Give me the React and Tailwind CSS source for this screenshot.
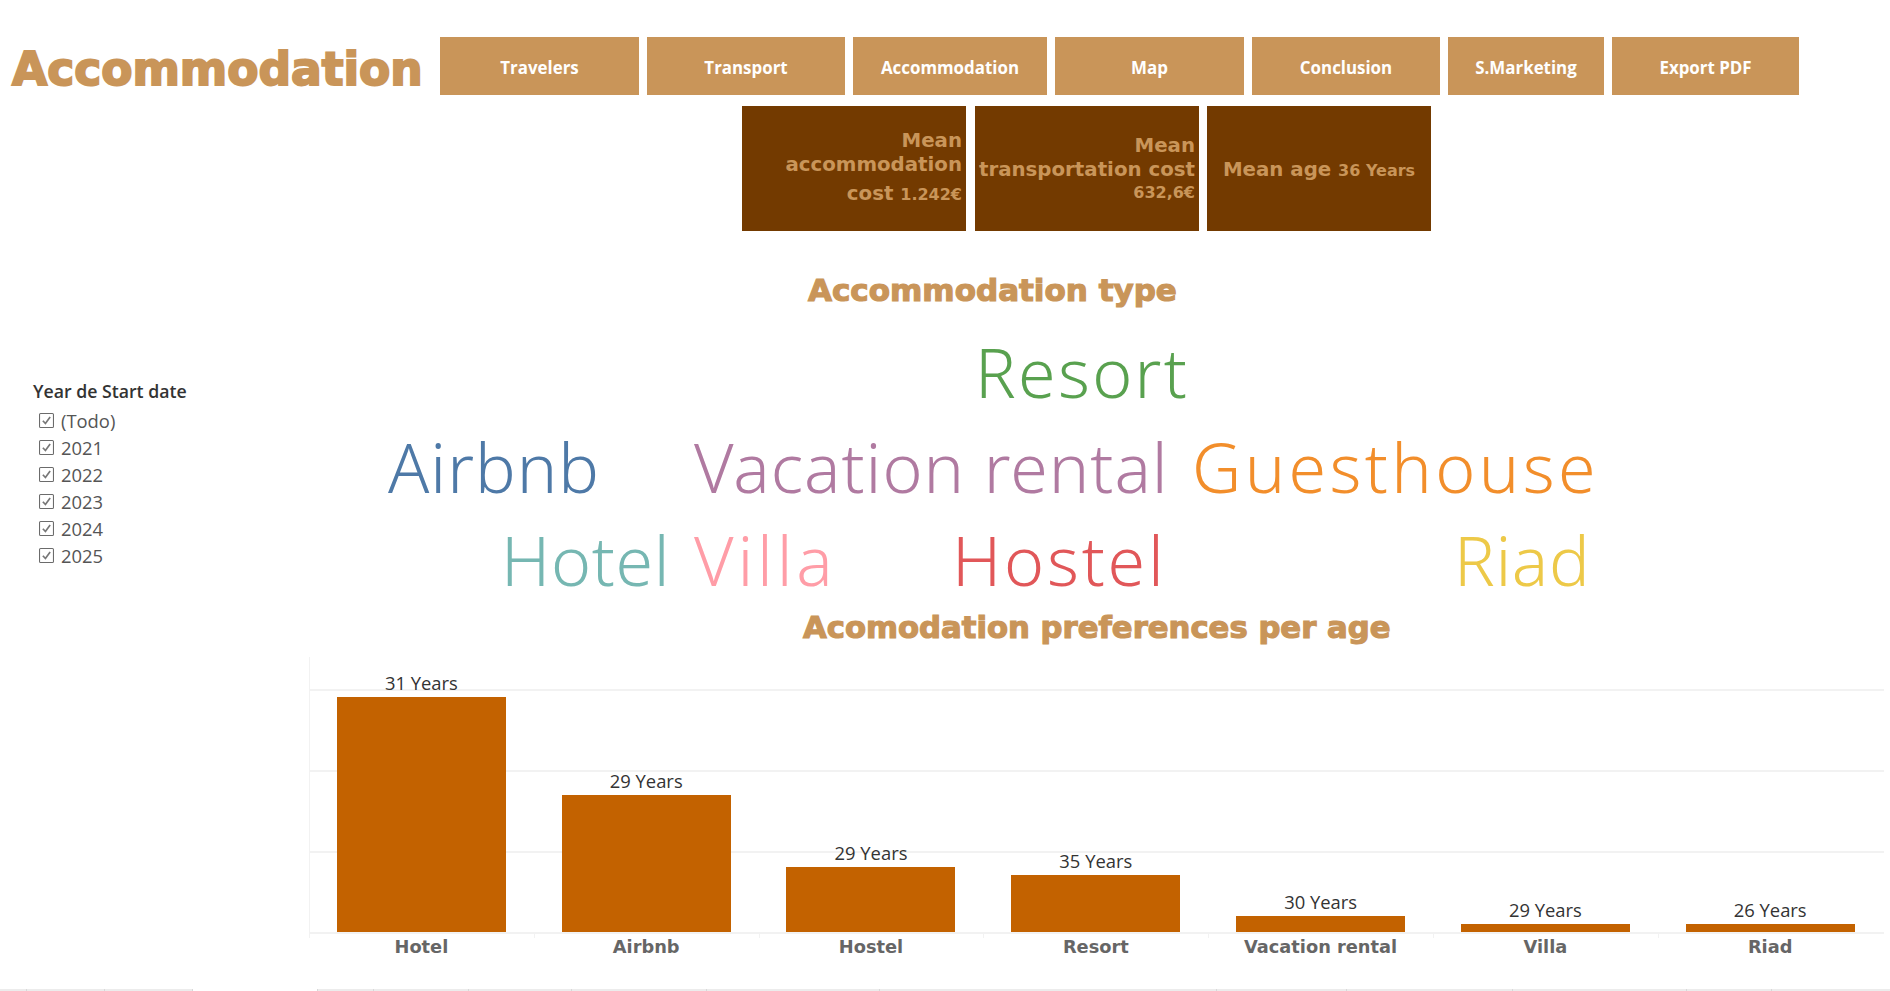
import React from "react";

const NAV = [
  ["Travelers", "w-[199px]"],
  ["Transport", "w-[198px]"],
  ["Accommodation", "w-[194px]"],
  ["Map", "w-[189px]"],
  ["Conclusion", "w-[188px]"],
  ["S.Marketing", "w-[156px]"],
  ["Export PDF", "w-[187px]"],
];

const YEARS = ["(Todo)", "2021", "2022", "2023", "2024", "2025"];

const WORDS = [
  ["Resort", "left-[666px] top-[30px] tracking-[2.3px] text-[#59a14f]"],
  ["Airbnb", "left-[79px] top-[125px] tracking-[1px] text-[#4e79a7]"],
  ["Vacation rental", "left-[385px] top-[125px] tracking-[1px] text-[#b07aa1]"],
  ["Guesthouse", "left-[883px] top-[125px] tracking-[3.4px] text-[#f28e2b]"],
  ["Hotel", "left-[192px] top-[218px] tracking-[0.7px] text-[#76b7b2]"],
  ["Villa", "left-[385px] top-[218px] tracking-[3.8px] text-[#ff9da7]"],
  ["Hostel", "left-[643px] top-[218px] tracking-[2.8px] text-[#e15759]"],
  ["Riad", "left-[1145px] top-[218px] tracking-[0.6px] text-[#edc948]"],
];

const BARS = [
  ["Hotel", "31 Years", 235],
  ["Airbnb", "29 Years", 137],
  ["Hostel", "29 Years", 65],
  ["Resort", "35 Years", 57],
  ["Vacation rental", "30 Years", 16],
  ["Villa", "29 Years", 8],
  ["Riad", "26 Years", 8],
];

const FOOT = [
  "w-[27px] border-r",
  "w-[78px] border-r",
  "w-[88px] border-r",
  "w-[125px] bg-white border-r",
  "w-[56px] border-r",
  "w-[95px] border-r",
  "w-[103px] border-r",
  "w-[135px] border-r",
  "w-[173px] border-r",
  "w-[337px] border-r",
  "w-[130px] border-r",
  "w-[166px] border-r",
  "w-[174px] border-r",
  "w-[85px] border-r",
  "flex-1",
];

function Check() {
  return (
    <svg viewBox="0 0 14 14" className="w-[15px] h-[15px] shrink-0">
      <rect x="0.5" y="0.5" width="13" height="13" rx="1" fill="#fff" stroke="#6b6b6b" />
      <path d="M3.6 7.2 L6 9.8 L10.4 3.8" fill="none" stroke="#777" strokeWidth="1.6" />
    </svg>
  );
}

function Heavy({ className, children }) {
  return (
    <h2 className={"font-['DejaVu_Sans',sans-serif] font-bold text-[#c99559] [-webkit-text-stroke:1.2px_#c99559] whitespace-nowrap " + className}>
      {children}
    </h2>
  );
}

export default function App() {
  return (
    <div className="w-[1890px] h-[991px] overflow-hidden bg-white flex flex-col font-['Open_Sans',sans-serif]">
      <header className="flex pt-[37px] h-[95px]">
        <h1 className="w-[440px] pl-[12px] pt-[4px] font-['DejaVu_Sans',sans-serif] font-bold text-[45.5px] leading-[58px] text-[#c99559] [-webkit-text-stroke:2px_#c99559] whitespace-nowrap">
          Accommodation
        </h1>
        <nav className="flex gap-2">
          {NAV.map(([label, w]) => (
            <div key={label} className={"h-[58px] bg-[#c99559] text-white font-bold text-[16.9px] flex items-center justify-center " + w}>
              <span className="pt-[3px]">{label}</span>
            </div>
          ))}
        </nav>
      </header>

      <section className="flex mt-[11px] pl-[742px] h-[125px] font-['DejaVu_Sans',sans-serif] font-bold text-[#c99559] text-[19.8px]">
        <div className="w-[224px] bg-[#733a00] flex flex-col items-end justify-center pr-[4px] leading-[24px] pb-[1px]">
          <span>Mean</span>
          <span>accommodation</span>
          <span className="mt-[5px]">cost <span className="text-[16px]">1.242€</span></span>
        </div>
        <div className="w-[224px] ml-[9px] bg-[#733a00] flex flex-col items-end justify-center pr-[4px] leading-[24px]">
          <span>Mean</span>
          <span>transportation cost</span>
          <span className="text-[16px] leading-[21px]">632,6€</span>
        </div>
        <div className="w-[224px] ml-[8px] bg-[#733a00] flex items-center justify-center whitespace-nowrap">
          <span className="pt-[3px]">Mean age <span className="text-[16px]">36 Years</span></span>
        </div>
      </section>

      <div className="flex flex-1">
        <aside className="w-[309px] pt-[148px] pl-[33px]">
          <h3 className="text-[17.7px] leading-[24px] font-semibold text-[#333]">Year de Start date</h3>
          <ul className="pl-[6px] text-[18.4px] text-[#555] mt-[4px]">
            {YEARS.map((y) => (
              <li key={y} className="flex items-center gap-[7px] h-[27px]">
                <Check />
                <span>{y}</span>
              </li>
            ))}
          </ul>
        </aside>

        <main className="w-[1581px]">
          <Heavy className="ml-[499px] mt-[41px] text-[31px] leading-[36px]">Accommodation type</Heavy>

          <div className="relative h-[302px]">
            {WORDS.map(([word, pos]) => (
              <span key={word} className={"absolute font-['Noto_Sans',sans-serif] font-light text-[68px] leading-none whitespace-nowrap " + pos}>
                {word}
              </span>
            ))}
          </div>

          <Heavy className="ml-[494px] text-[30.7px] leading-[36px]">Acomodation preferences per age</Heavy>

          <div className="relative mt-[11px] w-[1575px] h-[275px] flex items-end">
            <div className="absolute left-0 top-0 bottom-0 w-px bg-[#f2f2f2]" />
            <div className="absolute left-0 right-0 top-[32px] h-[2px] bg-[#f2f2f2]" />
            <div className="absolute left-0 right-0 top-[113px] h-[2px] bg-[#f2f2f2]" />
            <div className="absolute left-0 right-0 top-[194px] h-[2px] bg-[#f2f2f2]" />
            {BARS.map(([name, age, h]) => (
              <div key={name} className="relative w-[224.8px] flex flex-col items-center">
                <span className="text-[18.4px] leading-[22px] mb-[3px] text-[#333]">{age}</span>
                <div className="w-[169px] bg-[#c36200]" style={{ height: h }} />
              </div>
            ))}
          </div>
          <div className="flex w-[1575px] border-t-2 border-[#f2f2f2]">
            {BARS.map(([name]) => (
              <div key={name} className="w-[224.8px] text-center relative leading-[26px]">
                <div className="absolute left-0 top-0 w-px h-[4px] bg-[#f2f2f2]" />
                <span className="font-['DejaVu_Sans',sans-serif] font-bold text-[17.8px] text-[#666]">{name}</span>
              </div>
            ))}
          </div>
        </main>
      </div>

      <footer className="flex h-[2px] w-full bg-[#ececec]">
        {FOOT.map((c, i) => (
          <div key={i} className={"h-full border-[#d8d8d8] " + c} />
        ))}
      </footer>
    </div>
  );
}
